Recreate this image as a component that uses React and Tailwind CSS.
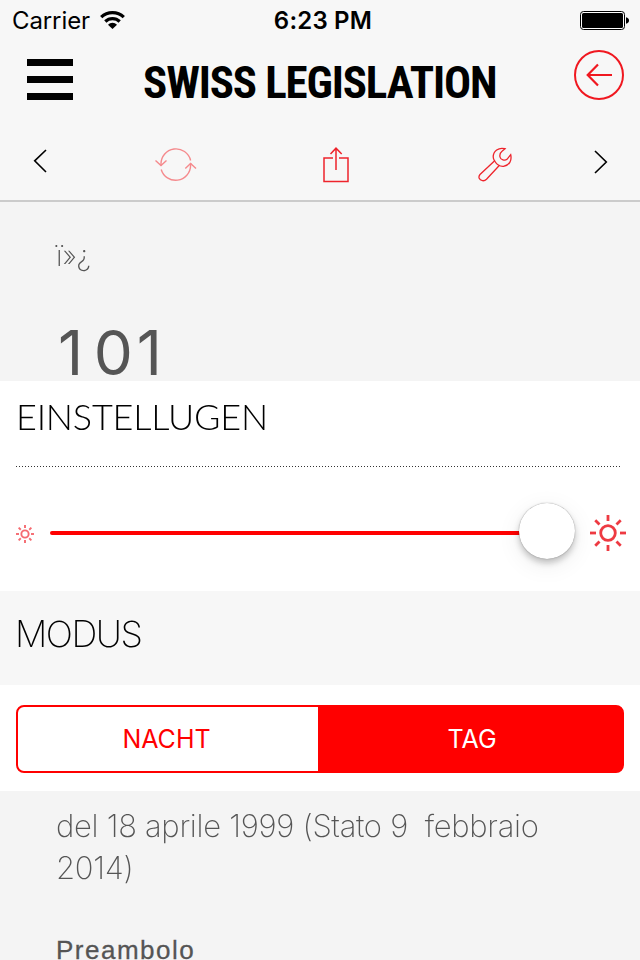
import React from 'react'

const rays = [0, 45, 90, 135, 180, 225, 270, 315]

function Sun({ size, stroke, className }) {
  return (
    <svg width={size} height={size} viewBox="0 0 36 36" fill="none" stroke="currentColor" strokeWidth={stroke} className={className}>
      <circle cx="18" cy="18" r="7.3" />
      {rays.map((angle) => (
        <path key={angle} d="M18 0V6" transform={`rotate(${angle} 18 18)`} />
      ))}
    </svg>
  )
}

function StatusBar() {
  return (
    <div className="flex h-10 items-center justify-between pl-3 pr-[11px] pt-px text-black">
      <div className="flex w-[200px] items-center">
        <span className="w-[78px] whitespace-nowrap pt-px font-['Inter'] text-[24px] tracking-[-0.1px]">Carrier</span>
        <svg width="25" height="19" viewBox="0 0 25 19" fill="none" stroke="black" strokeWidth="3.2" className="mb-px ml-[10px]">
          <path d="M1.2 6.2A16.2 16.2 0 0 1 23.8 6.2" />
          <path d="M5.3 10.5A10.4 10.4 0 0 1 19.7 10.5" />
          <path d="M8 13.7A6.4 6.4 0 0 1 17 13.7L12.5 18Z" fill="black" stroke="none" />
        </svg>
      </div>
      <span className="ml-[5px] pt-px font-['Inter'] text-[24px] font-semibold tracking-[0.2px]">6:23 PM</span>
      <div className="flex w-[200px] justify-end">
        <svg width="49" height="19" viewBox="0 0 49 19">
          <rect x="0.5" y="0.5" width="44" height="18" rx="3" fill="white" stroke="black" />
          <rect x="2" y="2" width="41" height="15" rx="1.5" />
          <path d="M46 6.3Q49 7 49 9.5T46 12.7Z" />
        </svg>
      </div>
    </div>
  )
}

function NavBar() {
  return (
    <div className="flex h-[82px] items-start pl-[27px] pr-4">
      <div className="mt-[19px] flex w-[46px] flex-col gap-[10.3px]">
        <div className="h-[6.7px] bg-black" />
        <div className="h-[6.7px] bg-black" />
        <div className="h-[6.7px] bg-black" />
      </div>
      <h1 className="ml-[70px] mt-[18px] w-[356px] whitespace-nowrap font-['Roboto'] text-[45px] font-bold leading-[50px] tracking-[-1.15px] text-black font-stretch-condensed">
        SWISS LEGISLATION
      </h1>
      <svg width="50" height="50" viewBox="0 0 50 50" fill="none" stroke="#f01820" strokeWidth="2" className="ml-auto mt-[10px]">
        <circle cx="25" cy="25" r="24" />
        <path d="M38 25H14M24 14.5L13.7 25L24 35.5" strokeWidth="2.2" />
      </svg>
    </div>
  )
}

function Toolbar() {
  return (
    <div className="flex h-[80px] items-start border-b-2 border-[#cbcbcb] text-[#ee242c]">
      <svg width="14" height="24" viewBox="0 0 14 24" fill="none" stroke="black" strokeWidth="1.6" className="ml-[33px] mt-[27px]">
        <path d="M13 1L1.7 11.8L13 23" />
      </svg>
      <svg width="42" height="34" viewBox="0 0 42 34" fill="none" stroke="#f58a8d" strokeWidth="1.4" className="ml-[108px] mt-[26px]">
        <path d="M6 17.5V16.5A15 15 0 0 1 35.6 12.5" />
        <path d="M35.6 15V17.5A15 15 0 0 1 6.2 21.5" />
        <path d="M0.5 12.5L6 17.5L11.5 12.5M30.3 20.5L35.6 15.5L41 20.5" />
      </svg>
      <svg width="27" height="36" viewBox="0 0 27 36" fill="none" stroke="currentColor" strokeWidth="1.5" className="ml-[126px] mt-[25px]">
        <path d="M10 11H1V34.5H25V11H16" />
        <path d="M13 23V1M7.5 7L13 1.2L18.7 7" />
      </svg>
      <svg width="34" height="35" viewBox="0 0 34 35" fill="none" stroke="currentColor" strokeWidth="1.3" className="ml-[128px] mt-[25px]">
        <path d="M27 1.7C20.5 0 15.2 4 15.2 10C15.2 12 15.8 13 17 14.5C19 18 22 19.5 25.5 19.3C31.5 18.5 34 13.5 32.7 7.7L29 12.3C27 13.8 22.5 13 22 10C21.3 6.8 22.5 5.5 24 4.3Z" />
        <path d="M16.4 14L2 27.5C0 30 1 33.2 4.5 33.7C6 33.9 7.5 33.3 8.5 32.3L21.5 18.3" />
      </svg>
      <svg width="14" height="24" viewBox="0 0 14 24" fill="none" stroke="black" strokeWidth="1.6" className="ml-[82px] mt-[28px]">
        <path d="M1 1L12.3 12L1 23" />
      </svg>
    </div>
  )
}

function Settings() {
  return (
    <section className="bg-white text-black">
      <div className="h-[210px] px-4 pt-[11px]">
        <h2 className="h-[74px] w-[300px] whitespace-nowrap font-['Lato'] text-[36px] font-light leading-[48px] tracking-[-0.2px] will-change-transform">
          EINSTELLUGEN
        </h2>
        <svg width="604" height="2" className="block">
          <path d="M0 0.5H604" stroke="#333" strokeWidth="1" strokeDasharray="1 2" />
        </svg>
        <div className="relative mt-[34px] flex h-[60px] items-center">
          <Sun size={18} stroke={3.8} className="mt-1 text-[#f56a70]" />
          <div className="ml-4 mt-0.5 h-1 w-[500px] rounded-full bg-[#ff0000]" />
          <Sun size={36} stroke={2.8} className="ml-auto mr-[-2px] mt-0.5 text-[#ee3a42]" />
          <div className="absolute left-[503px] top-px size-14 rounded-full bg-white shadow-[0_0_1px_rgba(0,0,0,0.5),0_4px_6px_rgba(0,0,0,0.22),0_6px_24px_rgba(0,0,0,0.08)]" />
        </div>
      </div>
      <div className="h-[94px] bg-[#f7f7f7] px-4 pt-[17px]">
        <h2 className="ml-[-1px] w-[200px] whitespace-nowrap font-['Inter'] text-[36px] font-extralight leading-[52px] tracking-[-1.5px] will-change-transform">
          MODUS
        </h2>
      </div>
      <div className="h-[106px] px-4 pt-5">
        <div className="flex h-[68px] overflow-hidden rounded-lg border-2 border-[#ff0000] bg-[linear-gradient(to_right,white_50%,#ff0000_50%)] font-['Inter'] text-[25px]">
          <div className="flex w-[300px] items-center justify-center pr-[3px] pt-0.5 text-[#ff0000]">NACHT</div>
          <div className="flex flex-1 items-center justify-center bg-[#ff0000] pl-1 pt-0.5 text-white">TAG</div>
        </div>
      </div>
    </section>
  )
}

export default function App() {
  return (
    <div className="h-[960px] w-[640px] overflow-hidden bg-[#f4f4f4] text-[#555]">
      <header className="bg-[#f7f7f7]">
        <StatusBar />
        <NavBar />
        <Toolbar />
      </header>
      <div className="h-[179px] pl-14 pt-[34px]">
        <p className="font-['Inter'] text-[29px] font-extralight leading-[40px] will-change-transform">ï»¿</p>
        <p className="ml-0.5 mt-[39px] whitespace-nowrap font-['Inter'] text-[62px] leading-[76px] tracking-[4px]">
          <span className="tracking-[10.5px]">1</span>01
        </p>
      </div>
      <Settings />
      <article className="px-14 pt-[14px]">
        <p className="whitespace-pre font-['Inter'] text-[31px] font-extralight leading-[42px] tracking-[-0.3px] will-change-transform">
          {'del 18 aprile 1999 (Stato 9  febbraio\n2014)'}
        </p>
        <p className="mt-[45px] font-['Liberation_Sans'] text-[26px] leading-[32px] tracking-[1.5px] [-webkit-text-stroke:0.3px_#555]">Preambolo</p>
      </article>
    </div>
  )
}
